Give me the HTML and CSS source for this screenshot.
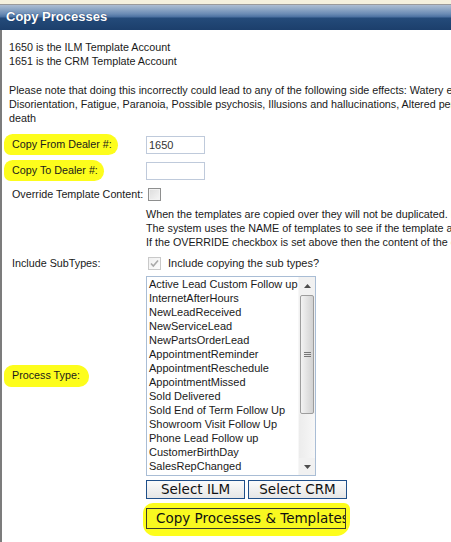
FILE: index.html
```html
<!DOCTYPE html>
<html>
<head>
<meta charset="utf-8">
<title>Copy Processes</title>
<link rel="stylesheet" href="styles.css">
</head>
<body>
<div class="top"></div>
<div class="header">Copy Processes</div>
<div class="panel">
  <div class="intro">
    <p>1650 is the ILM Template Account<br>1651 is the CRM Template Account</p>
    <p class="warn">Please note that doing this incorrectly could lead to any of the following side effects: Watery eyes, Headache, Nausea,<br>Disorientation, Fatigue, Paranoia, Possible psychosis, Illusions and hallucinations, Altered perception of time and space, and<br>death</p>
  </div>
  <div class="form">
    <div class="lbl r-from"><span class="hl">Copy From Dealer #:</span></div>
    <div class="fld r-from"><input class="txt" type="text" value="1650"></div>

    <div class="lbl r-to"><span class="hl">Copy To Dealer #:</span></div>
    <div class="fld r-to"><input class="txt" type="text" value=""></div>

    <div class="lbl r-ovr">Override Template Content:</div>
    <div class="fld r-ovr"><span class="cb"></span></div>

    <div class="note">When the templates are copied over they will not be duplicated. Existing templates are left as they are.<br>The system uses the NAME of templates to see if the template already exists on the target dealer.<br>If the OVERRIDE checkbox is set above then the content of the existing templates will be replaced.</div>

    <div class="lbl r-sub">Include SubTypes:</div>
    <div class="fld r-sub"><span class="cb cb-dis"><svg width="11" height="11" viewBox="0 0 11 11"><path d="M2 5.5 L4.3 8 L9 2.5" fill="none" stroke="#a9a9a9" stroke-width="1.6"/></svg></span><span class="cbtxt">Include copying the sub types?</span></div>

    <div class="lbl r-list"><span class="hl hl2">Process Type:</span></div>
    <div class="fld r-list">
      <div class="listbox">
        <ul class="items">
          <li>Active Lead Custom Follow up</li>
          <li>InternetAfterHours</li>
          <li>NewLeadReceived</li>
          <li>NewServiceLead</li>
          <li>NewPartsOrderLead</li>
          <li>AppointmentReminder</li>
          <li>AppointmentReschedule</li>
          <li>AppointmentMissed</li>
          <li>Sold Delivered</li>
          <li>Sold End of Term Follow Up</li>
          <li>Showroom Visit Follow Up</li>
          <li>Phone Lead Follow up</li>
          <li>CustomerBirthDay</li>
          <li>SalesRepChanged</li>
        </ul>
        <div class="sbar">
          <div class="arrow"><svg width="7" height="4" viewBox="0 0 7 4"><path d="M0 4 L3.5 0 L7 4 Z" fill="#4d4d4d"/></svg></div>
          <div class="thumb"><span class="grip"></span></div>
          <div class="track"></div>
          <div class="arrow"><svg width="7" height="4" viewBox="0 0 7 4"><path d="M0 0 L3.5 4 L7 0 Z" fill="#4d4d4d"/></svg></div>
        </div>
      </div>
    </div>

    <div class="fld r-btn">
      <button class="btn">Select ILM</button>
      <button class="btn">Select CRM</button>
    </div>

    <div class="fld r-copy">
      <span class="hlbtn"><button class="btn btn-copy">Copy Processes &amp; Templates</button></span>
    </div>
  </div>
</div>
</body>
</html>
```

FILE: styles.css
```css
html, body {
  margin: 0;
  padding: 0;
  background: #ffffff;
  overflow: hidden;
}
body {
  width: 451px;
  height: 542px;
  font-family: "Liberation Sans", Arial, sans-serif;
  font-size: 10.75px;
  color: #1a1a1a;
}
.top {
  height: 4px;
  background: #f4f0dd;
  border-bottom: 1px solid #9a9a9a;
}
.header {
  height: 25px;
  line-height: 24px;
  padding-left: 6px;
  font-size: 13px;
  font-weight: bold;
  color: #ffffff;
  text-shadow: 0 0 1px #1a3560;
  background: linear-gradient(to bottom, #adbdd2 0px, #8fa8c6 4px, #6a8bb4 9px, #4a70a0 12px, #244b7a 13px, #1c3f6c 25px);
}
.panel {
  border-left: 2px solid #7c7c7c;
  height: 512px;
  padding-left: 7px;
}
.intro {
  padding-top: 10px;
  line-height: 14px;
  white-space: nowrap;
}
.intro p {
  margin: 0;
}
.intro .warn {
  margin-top: 15px;
}
.form {
  margin-top: 7px;
  margin-left: 3px;
  display: grid;
  grid-template-columns: 134px auto;
  grid-template-rows: 25px 27px 20px 46px 26px 200px 29px 32px;
}
.lbl {
  grid-column: 1;
  display: flex;
  align-items: center;
  white-space: nowrap;
}
.fld {
  grid-column: 2;
  display: flex;
  align-items: center;
  white-space: nowrap;
}
.r-from { grid-row: 1; }
.r-to { grid-row: 2; }
.r-ovr { grid-row: 3; }
.note { grid-row: 4; grid-column: 2; white-space: nowrap; line-height: 14px; padding-top: 3px; }
.r-sub { grid-row: 5; }
.r-list { grid-row: 6; }
.r-btn { grid-row: 7; align-items: flex-start; padding-top: 4px; gap: 3px; }
.r-copy { grid-row: 8; align-items: flex-start; }

.hl {
  background: #fdfd1c;
  margin-left: -8px;
  padding: 4px 6px 5px 8px;
  border-radius: 9px 12px 10px 7px;
}
.hl2 {
  padding: 4px 9px 6px 8px;
}
.txt {
  box-sizing: border-box;
  width: 59px;
  height: 18px;
  margin: 0;
  padding: 0 2px;
  border: 1px solid #bfcadb;
  font-family: "Liberation Sans", Arial, sans-serif;
  font-size: 11px;
  color: #333;
  background: #fff;
  outline: none;
}
.cb {
  box-sizing: border-box;
  display: inline-flex;
  align-items: center;
  justify-content: center;
  width: 13px;
  height: 13px;
  margin-left: 2px;
  border: 1px solid #8e8f8f;
  background: linear-gradient(135deg, #dcdcdc, #f6f6f6);
  box-shadow: inset 0 0 0 1px #f2f2f2;
}
.cb-dis {
  border-color: #c9c9c9;
  background: linear-gradient(135deg, #f0f0f0, #fbfbfb);
  box-shadow: none;
}
.cbtxt {
  margin-left: 7px;
  font-size: 11px;
  color: #222;
}
.listbox {
  box-sizing: border-box;
  width: 170px;
  height: 200px;
  border: 1px solid #a9bdd5;
  display: flex;
  background: #fff;
}
.items {
  flex: 1;
  list-style: none;
  margin: 0;
  padding: 0 0 0 2px;
  line-height: 14px;
  font-size: 11px;
  color: #1a1a1a;
  overflow: hidden;
}
.sbar {
  width: 16px;
  display: flex;
  flex-direction: column;
  background: #f1f1f1;
  border-left: 1px solid #f7f7f7;
}
.arrow {
  height: 17px;
  display: flex;
  align-items: center;
  justify-content: center;
}
.thumb {
  box-sizing: border-box;
  height: 119px;
  margin: 1px 1px 0 1px;
  border: 1px solid #9d9d9d;
  border-radius: 2px;
  background: linear-gradient(to right, #f3f3f3, #e2e2e2 50%, #d2d2d2);
  display: flex;
  align-items: center;
  justify-content: center;
}
.grip {
  width: 7px;
  height: 5px;
  border-top: 1px solid #777;
  border-bottom: 1px solid #777;
  background: linear-gradient(#777, #777) center / 7px 1px no-repeat;
  box-sizing: border-box;
}
.track {
  flex: 1;
  background: linear-gradient(to right, #ececec, #f7f7f7);
}
.btn {
  box-sizing: border-box;
  width: 99px;
  height: 19px;
  margin: 0;
  padding: 0;
  border: 1px solid #1f4f8a;
  background: linear-gradient(to bottom, #fbfbfb, #e6e6e6);
  font-family: "DejaVu Sans", Verdana, sans-serif;
  font-size: 13.5px;
  line-height: 17px;
  color: #111;
}
.hlbtn {
  display: inline-block;
  background: #fdfd1c;
  margin-left: -3px;
  margin-top: -2px;
  padding: 5px 4px 7px 3px;
  border-radius: 10px 6px 14px 12px;
}
.btn-copy {
  width: 200px;
  height: 21px;
  border: 1px solid #3d3d2a;
  background: #f8f820;
  text-align: left;
  padding-left: 9px;
  white-space: nowrap;
  overflow: hidden;
}
```
